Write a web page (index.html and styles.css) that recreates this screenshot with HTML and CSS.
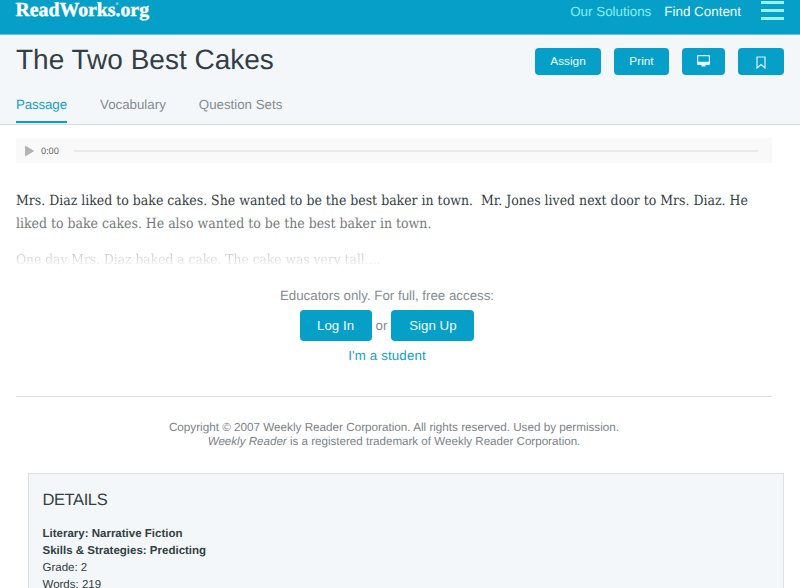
FILE: index.html
```html
<!DOCTYPE html>
<html lang="en">
<head>
<meta charset="utf-8">
<title>The Two Best Cakes</title>
<link rel="stylesheet" href="styles.css">
</head>
<body>
<header class="topbar">
  <a class="logo">ReadWorks<sup>®</sup>.org</a>
  <nav class="topnav">
    <a class="solutions">Our Solutions</a>
    <a class="find">Find Content</a>
    <div class="burger"><span></span><span></span><span></span></div>
  </nav>
</header>
<section class="heading">
  <div class="title-row">
    <h1>The Two Best Cakes</h1>
    <div class="actions">
      <button class="btn assign">Assign</button>
      <button class="btn print">Print</button>
      <button class="btn screen"><svg width="14" height="12" viewBox="0 0 14 12"><path d="M1 0h11q1 0 1 1v8q0 1-1 1H8.500v1.500h-4V10H1q-1 0-1-1V1q0-1 1-1zM1.200 1.200v5.600h10.600V1.200z" fill="#e4fbff" fill-rule="evenodd"/></svg></button>
      <button class="btn mark"><svg width="10" height="13" viewBox="0 0 10 13"><path d="M1 1h8v11L5 8.500 1 12z" fill="none" stroke="#d4f5fb" stroke-width="1.200"/></svg></button>
    </div>
  </div>
  <nav class="tabs">
    <a class="tab active">Passage</a>
    <a class="tab vocab">Vocabulary</a>
    <a class="tab">Question Sets</a>
  </nav>
</section>
<main>
  <div class="player">
    <svg width="10" height="12" viewBox="0 0 10 12"><path d="M0 .5 9.300 6 0 11.500z" fill="#b1b3b4"/></svg>
    <span class="time">0:00</span>
    <div class="track"></div>
  </div>
  <article class="passage">
    <p><span class="line one">Mrs. Diaz liked to bake cakes. She wanted to be the best baker in town.&nbsp; Mr. Jones lived next door to Mrs. Diaz. He</span><br><span class="line two">liked to bake cakes. He also wanted to be the best baker in town.</span></p>
    <p><span class="line three">One day Mrs. Diaz baked a cake. The cake was very tall....</span></p>
  </article>
  <section class="access">
    <p>Educators only. For full, free access:</p>
    <div class="login-row">
      <button class="btn login">Log In</button><span>or</span><button class="btn signup">Sign Up</button>
    </div>
    <a class="student">I'm a student</a>
  </section>
  <footer class="copyright">
    <p>Copyright © 2007 Weekly Reader Corporation. All rights reserved. Used by permission.</p>
    <p class="trademark"><em>Weekly Reader</em> is a registered trademark of Weekly Reader Corporation.</p>
  </footer>
</main>
<section class="details">
  <h2>DETAILS</h2>
  <p><b>Literary: Narrative Fiction</b></p>
  <p><b>Skills &amp; Strategies: Predicting</b></p>
  <p>Grade: 2</p>
  <p>Words: 219</p>
</section>
</body>
</html>
```
FILE: styles.css
```css
* { box-sizing: border-box; }
html, body { height: 588px; overflow: hidden; }
body { margin: 0; background: #fff; color: #343e45; font-family: "Liberation Sans", Arial, sans-serif; text-rendering: geometricPrecision; }
h1, h2, p { margin: 0; font-weight: 400; }
.topbar { height: 35px; background: #069fc8; border-bottom: 1px solid #72c5dc; display: flex; justify-content: space-between; align-items: flex-start; padding: 0 16px 0 15.5px; }
.logo { color: #fff; font: 700 19.8px/22px "Liberation Serif", serif; margin-top: -1px; -webkit-text-stroke: .4px #fff; white-space: nowrap; }
.logo sup { font-size: 4px; line-height: 0; display: inline-block; width: 0; vertical-align: 11px; -webkit-text-stroke: 0; }
.topnav { display: flex; align-items: flex-start; font-size: 13.4px; line-height: 16px; padding-top: 4px; }
.solutions { color: #86eff5; margin-right: 13px; }
.find { color: #f2feff; }
.burger { width: 23px; margin: -3px 0 0 20px; display: flex; flex-direction: column; gap: 5px; }
.burger span { height: 3px; background: #95f3f6; }
.heading { height: 90px; background: #f3f7f9; border-bottom: 1px solid #d5dddf; padding: 0 16px; }
.title-row { height: 52px; display: flex; justify-content: space-between; align-items: flex-start; }
h1 { font-size: 28px; line-height: 32px; padding-top: 9px; }
.actions { display: flex; gap: 13px; padding-top: 13px; }
.btn { height: 27px; padding: 0; border: 0; border-radius: 4px; background: #069fc8; color: #f0fbfd; font: 11.8px "Liberation Sans", Arial, sans-serif; display: flex; align-items: center; justify-content: center; }
.actions .btn { padding-bottom: 1px; }
.assign { width: 66px; }
.print { width: 55px; }
.screen { width: 43px; }
.actions .mark { width: 46px; padding: 2px 0 0; }
.tabs { display: flex; height: 37px; gap: 33px; }
.tab { font-size: 13.3px; line-height: 16px; padding-top: 10px; height: 36px; color: #858c91; }
.active { width: 51px; letter-spacing: -.12px; color: #139fc4; border-bottom: 2px solid #069fc8; }
main { padding: 13px 28px 0 16px; }
.player { height: 25px; background: #f9f9f9; display: flex; align-items: center; padding: 0 14px 0 9px; }
.time { font: 9px "Open Sans", sans-serif; color: #535658; margin-left: 6px; width: 33px; }
.track { flex: 1; height: 2px; background: #e8eaea; }
.passage { height: 120px; padding-top: 27px; font-family: "DejaVu Serif", serif; font-stretch: condensed; font-size: 13.93px; line-height: 23px; white-space: nowrap; }
.passage p + p { margin-top: 13px; }
.two { color: #747a7e; }
.three { font-size: 13.7px; color: transparent; background: linear-gradient(#ccced0 15%, #dfe0e1 55%, #fff 90%); background-clip: text; -webkit-background-clip: text; }
.access { height: 114px; border-bottom: 1px solid #dde0e2; display: flex; flex-direction: column; align-items: center; font-size: 13.3px; line-height: 16px; color: #858c91; padding: 5px 14px 0 0; }
.login-row { display: flex; align-items: center; margin: 6px 0 7px; }
.login-row .btn { font-size: 13.3px; height: 31px; }
.login-row span { margin: 0 4px; }
.login { width: 72px; }
.signup { width: 83px; }
.student { color: #139fc4; letter-spacing: .15px; }
.copyright { height: 76px; padding-top: 24px; font-size: 11.7px; line-height: 14px; text-align: center; color: #7c8388; }
.trademark { font-size: 11.6px; }
.details { height: 116px; margin: 0 16px 0 28px; background: #f3f7f9; border: 1px solid #dbe1e3; padding: 16px 13.5px 0; overflow: hidden; font-size: 11.5px; line-height: 17px; }
h2 { font-size: 16.500px; line-height: 20px; margin-bottom: 16px; letter-spacing: -.4px; }
```
